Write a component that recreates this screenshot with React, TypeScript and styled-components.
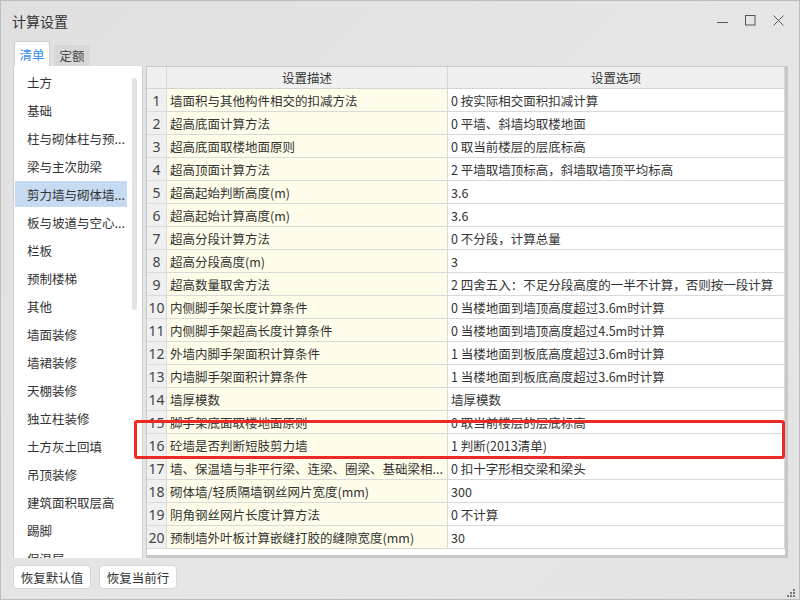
import React from 'react';
import styled, { createGlobalStyle } from 'styled-components';

const GlobalStyle = createGlobalStyle`
  html, body {
    margin: 0;
    padding: 0;
    background: #e4e4e4;
  }
  body {
    font-family: 'Noto Sans CJK SC', 'Noto Sans', sans-serif;
    color: #333;
  }
  * {
    box-sizing: border-box;
  }
`;

const categories = [
  '土方',
  '基础',
  '柱与砌体柱与预...',
  '梁与主次肋梁',
  '剪力墙与砌体墙...',
  '板与坡道与空心...',
  '栏板',
  '预制楼梯',
  '其他',
  '墙面装修',
  '墙裙装修',
  '天棚装修',
  '独立柱装修',
  '土方灰土回填',
  '吊顶装修',
  '建筑面积取层高',
  '踢脚',
  '保温层',
];

const rows: [string, string][] = [
  ['墙面积与其他构件相交的扣减方法', '0 按实际相交面积扣减计算'],
  ['超高底面计算方法', '0 平墙、斜墙均取楼地面'],
  ['超高底面取楼地面原则', '0 取当前楼层的层底标高'],
  ['超高顶面计算方法', '2 平墙取墙顶标高，斜墙取墙顶平均标高'],
  ['超高起始判断高度(m)', '3.6'],
  ['超高起始计算高度(m)', '3.6'],
  ['超高分段计算方法', '0 不分段，计算总量'],
  ['超高分段高度(m)', '3'],
  ['超高数量取舍方法', '2 四舍五入：不足分段高度的一半不计算，否则按一段计算'],
  ['内侧脚手架长度计算条件', '0 当楼地面到墙顶高度超过3.6m时计算'],
  ['内侧脚手架超高长度计算条件', '0 当楼地面到墙顶高度超过4.5m时计算'],
  ['外墙内脚手架面积计算条件', '1 当楼地面到板底高度超过3.6m时计算'],
  ['内墙脚手架面积计算条件', '1 当楼地面到板底高度超过3.6m时计算'],
  ['墙厚模数', '墙厚模数'],
  ['脚手架底面取楼地面原则', '0 取当前楼层的层底标高'],
  ['砼墙是否判断短肢剪力墙', '1 判断(2013清单)'],
  ['墙、保温墙与非平行梁、连梁、圈梁、基础梁相...', '0 扣十字形相交梁和梁头'],
  ['砌体墙/轻质隔墙钢丝网片宽度(mm)', '300'],
  ['阴角钢丝网片长度计算方法', '0 不计算'],
  ['预制墙外叶板计算嵌缝打胶的缝隙宽度(mm)', '30'],
];

export default function App() {
  return (
    <>
      <GlobalStyle />
      <Window>
        <TitleBar>
          <Title>计算设置</Title>
          <Controls>
            <ControlButton>
              <svg width="11" height="11" viewBox="0 0 11 11">
                <line x1="0" y1="7.5" x2="11" y2="7.5" stroke="#555" strokeWidth="1" />
              </svg>
            </ControlButton>
            <ControlButton>
              <svg width="11" height="11" viewBox="0 0 11 11">
                <rect x="0.5" y="0.5" width="9.5" height="9.5" fill="none" stroke="#555" strokeWidth="1" />
              </svg>
            </ControlButton>
            <ControlButton>
              <svg width="11" height="11" viewBox="0 0 11 11">
                <path d="M0.5 0.5 L10.5 10.5 M10.5 0.5 L0.5 10.5" stroke="#555" strokeWidth="1" />
              </svg>
            </ControlButton>
          </Controls>
        </TitleBar>

        <Body>
          <Tabs>
            <Tab $active>清单</Tab>
            <Tab>定额</Tab>
          </Tabs>
          <Content>
            <ListPanel>
              <ListItems>
                {categories.map((c, i) => (
                  <ListItem key={c} $selected={i === 4}>
                    {c}
                  </ListItem>
                ))}
              </ListItems>
              <ScrollTrack>
                <ScrollThumb />
              </ScrollTrack>
            </ListPanel>
            <TablePanel>
              <HeaderRow>
                <HeaderCell />
                <HeaderCell>设置描述</HeaderCell>
                <HeaderCell>设置选项</HeaderCell>
              </HeaderRow>
              {rows.map(([desc, opt], i) => (
                <Row key={i}>
                  <NumCell>{i + 1}</NumCell>
                  <DescCell>{desc}</DescCell>
                  <OptCell>{opt}</OptCell>
                </Row>
              ))}
            </TablePanel>
          </Content>
        </Body>

        <Footer>
          <FooterButton>恢复默认值</FooterButton>
          <FooterButton>恢复当前行</FooterButton>
          <Grip>
            <svg width="8" height="8" viewBox="0 0 8 8">
              <rect x="6" y="0" width="2" height="2" fill="#777" />
              <rect x="3" y="3" width="2" height="2" fill="#777" />
              <rect x="6" y="3" width="2" height="2" fill="#777" />
              <rect x="0" y="6" width="2" height="2" fill="#777" />
              <rect x="3" y="6" width="2" height="2" fill="#777" />
              <rect x="6" y="6" width="2" height="2" fill="#777" />
            </svg>
          </Grip>
        </Footer>

        <Highlight />
      </Window>
    </>
  );
}

const Window = styled.div`
  position: relative;
  width: 800px;
  height: 600px;
  border: 1px solid #bdbdbd;
  background: linear-gradient(135deg, #e0e0e0 0%, #e6e6e6 60%, #e3e3e3 100%);
  display: flex;
  flex-direction: column;
`;

const TitleBar = styled.div`
  height: 39px;
  display: flex;
  align-items: center;
  justify-content: space-between;
  padding: 0 7px 0 11px;
`;

const Title = styled.span`
  font-size: 14px;
  color: #333;
`;

const Controls = styled.div`
  display: flex;
  align-items: center;
`;

const ControlButton = styled.div`
  width: 28px;
  height: 24px;
  display: flex;
  align-items: center;
  justify-content: center;
`;

const Body = styled.div`
  padding: 0 11px 0 12px;
  display: flex;
  flex-direction: column;
`;

const Tabs = styled.div`
  display: flex;
  align-items: flex-end;
  gap: 4px;
  height: 26px;
`;

const Tab = styled.div<{ $active?: boolean }>`
  width: 36px;
  height: ${(p) => (p.$active ? '25px' : '21px')};
  display: flex;
  align-items: center;
  justify-content: center;
  font-size: 12.5px;
  color: ${(p) => (p.$active ? '#3a8ce6' : '#444')};
  background: ${(p) => (p.$active ? '#ffffff' : '#d8d8d8')};
  border: ${(p) => (p.$active ? '1px solid #cfcfcf' : 'none')};
  border-bottom: none;
  border-radius: 3px 3px 0 0;
  margin-left: ${(p) => (p.$active ? '1px' : '0')};
`;

const Content = styled.div`
  display: flex;
  gap: 3px;
  height: 492px;
`;

const ListPanel = styled.div`
  width: 130px;
  background: #fff;
  border-left: 1px solid #cdcdcd;
  border-right: 1px solid #d2d2d2;
  display: flex;
  overflow: hidden;
`;

const ListItems = styled.div`
  width: 113px;
  padding: 3px 0 0 1px;
  display: flex;
  flex-direction: column;
  gap: 2px;
`;

const ListItem = styled.div<{ $selected?: boolean }>`
  height: 26px;
  flex-shrink: 0;
  display: flex;
  align-items: center;
  padding-left: 12px;
  font-size: 12.5px;
  color: #333;
  white-space: nowrap;
  overflow: hidden;
  background: ${(p) => (p.$selected ? '#c6dbf1' : 'transparent')};
`;

const ScrollTrack = styled.div`
  flex: 1;
  padding: 12px 0 0 5px;
`;

const ScrollThumb = styled.div`
  width: 5px;
  height: 232px;
  border-radius: 3px;
  background: #e3e3e3;
`;

const TablePanel = styled.div`
  flex: 1;
  background: #fff;
  border: 1px solid #c9c9c9;
  border-right: 3px solid #c8c8c8;
  border-bottom: 3px solid #c8c8c8;
  display: flex;
  flex-direction: column;
`;

const Grid = styled.div`
  display: grid;
  grid-template-columns: 20px 281px 337px;
  flex-shrink: 0;
`;

const HeaderRow = styled(Grid)`
  height: 22px;
  background: #f0f0f0;
  border-bottom: 1px solid #d4d4d4;
`;

const HeaderCell = styled.div`
  display: flex;
  align-items: center;
  justify-content: center;
  font-size: 12.5px;
  color: #333;
  border-right: 1px solid #d4d4d4;
`;

const Row = styled(Grid)`
  height: 23px;
  border-bottom: 1px solid #d9d9d9;
`;

const Cell = styled.div`
  display: flex;
  align-items: center;
  font-size: 12.5px;
  color: #333;
  white-space: nowrap;
  overflow: hidden;
  border-right: 1px solid #d9d9d9;
`;

const NumCell = styled(Cell)`
  justify-content: center;
  background: #f0f0f0;
  font-family: 'Noto Sans', sans-serif;
  font-size: 14px;
  color: #444;
`;

const DescCell = styled(Cell)`
  background: #fffde9;
  padding-left: 3px;
`;

const OptCell = styled(Cell)`
  background: #fff;
  padding-left: 3px;
`;

const Footer = styled.div`
  flex: 1;
  display: flex;
  align-items: flex-start;
  gap: 8px;
  padding: 7px 4px 2px 12px;
`;

const FooterButton = styled.button`
  width: 78px;
  height: 24px;
  padding: 0;
  background: #fff;
  border: 1px solid #d6d6d6;
  border-radius: 4px;
  font-family: 'Noto Sans CJK SC', sans-serif;
  font-size: 12.5px;
  color: #333;
`;

const Grip = styled.div`
  margin-left: auto;
  align-self: flex-end;
  display: flex;
`;

const Highlight = styled.div`
  position: absolute;
  left: 133px;
  top: 419px;
  width: 651px;
  height: 39px;
  border: 3px solid #ec2b27;
  border-radius: 3px;
  pointer-events: none;
`;
